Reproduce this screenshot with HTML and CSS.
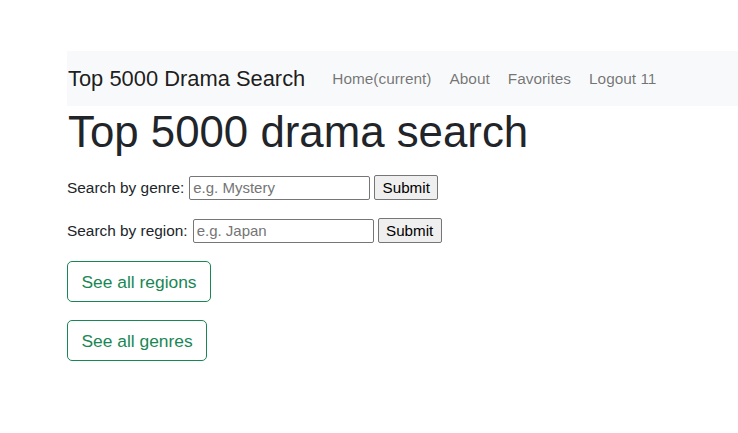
FILE: index.html
```html
<!DOCTYPE html>
<html>
<head>
<meta charset="utf-8">
<link rel="stylesheet" href="styles.css">
</head>
<body>
<div class="page">
  <nav class="navbar">
    <a class="brand" href="#">Top 5000 Drama Search</a>
    <ul class="nav">
      <li><a class="nav-link" href="#">Home(current)</a></li>
      <li><a class="nav-link" href="#">About</a></li>
      <li><a class="nav-link" href="#">Favorites</a></li>
      <li><a class="nav-link" href="#">Logout 11</a></li>
    </ul>
  </nav>
  <h1 class="title">Top 5000 drama search</h1>
  <form class="search-row search-genre">
    <label class="label">Search by genre:</label>
    <input class="field" type="text" placeholder="e.g. Mystery">
    <button class="submit" type="button">Submit</button>
  </form>
  <form class="search-row search-region">
    <label class="label">Search by region:</label>
    <input class="field" type="text" placeholder="e.g. Japan">
    <button class="submit" type="button">Submit</button>
  </form>
  <div class="links">
    <a class="btn-outline" href="#">See all regions</a>
    <a class="btn-outline" href="#">See all genres</a>
  </div>
</div>
</body>
</html>
```
FILE: styles.css
```css
* { box-sizing: border-box; }
html, body { margin: 0; padding: 0; background: #fff; }
body {
  font-family: "Liberation Sans", Arial, sans-serif;
  font-size: 15.4px;
  color: #212529;
}
.page {
  padding: 51px 0 0 67px;
}
.navbar {
  display: flex;
  align-items: center;
  height: 55px;
  background: #f8f9fa;
  padding-left: 1px;
}
.brand {
  font-size: 21.9px;
  color: rgba(0,0,0,0.9);
  text-decoration: none;
  margin-right: 18px;
  line-height: 1;
}
.nav {
  display: flex;
  list-style: none;
  margin: 0;
  padding: 0;
}
.nav-link {
  display: block;
  padding: 0 9px;
  color: rgba(0,0,0,0.55);
  text-decoration: none;
  line-height: 24px;
}
.title {
  margin: 0 0 0 1px;
  font-size: 43.8px;
  font-weight: 400;
  line-height: 52px;
  color: #212529;
}
.search-row {
  display: flex;
  align-items: center;
  height: 25px;
  margin: 0;
}
.search-genre { margin-top: 17px; }
.search-region { margin-top: 18px; }
.label { margin-right: 5px; }
.field {
  width: 181px;
  height: 24px;
  border: 1px solid #767676;
  border-radius: 2px;
  padding: 1px 3px;
  font-family: "Liberation Sans", Arial, sans-serif;
  font-size: 15px;
  color: #000;
  margin-right: 4px;
}
.field::placeholder { color: #757575; }
.submit {
  height: 25px;
  width: 64px;
  padding: 0;
  background: #efefef;
  border: 1px solid #767676;
  border-radius: 2px;
  font-family: "Liberation Sans", Arial, sans-serif;
  font-size: 15.2px;
  color: #000;
}
.links {
  display: flex;
  flex-direction: column;
  align-items: flex-start;
  gap: 18px;
  margin-top: 18px;
}
.btn-outline {
  display: inline-block;
  font-size: 17.4px;
  line-height: 26px;
  padding: 6.5px 13.5px;
  border: 1px solid #198754;
  border-radius: 5px;
  color: #198754;
  text-decoration: none;
}
```
